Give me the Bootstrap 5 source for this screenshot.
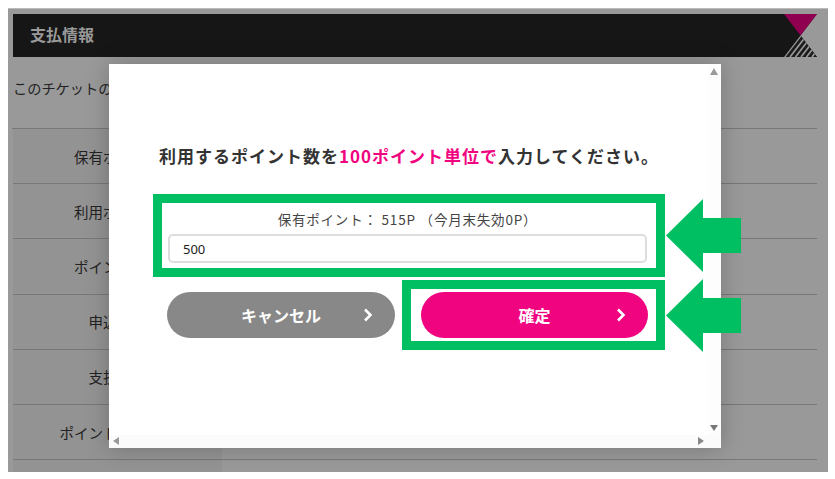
<!DOCTYPE html>
<html lang="ja">
<head>
<meta charset="utf-8">
<title>支払情報</title>
<link rel="stylesheet" href="https://cdn.jsdelivr.net/npm/bootstrap@5.3.0/dist/css/bootstrap.min.css">
<style>
html,body{height:100%;overflow:hidden;background:#fff}
body{font-family:"Noto Sans CJK JP","Liberation Sans",sans-serif;color:#333}
.stage{margin:8px 7px 0 8px;height:464px;background:#999;padding:6px 11px 0 5px;overflow:hidden;border-top:1px solid #bbb}
.pay-head{height:43px;margin-top:-1px;background:#161616;color:#999;font-size:16px;font-weight:700;padding-left:17px}
.pay-title{position:relative;top:-2px}
.pay-logo{width:33px;height:43px;display:block}
.pay-intro{height:72px;font-size:14.2px;color:#222;padding-top:21px;margin-left:-1px;padding-left:1px;border-bottom:1px solid #777}
.pay-row{height:55.2px;border-bottom:1px solid #777}
.pay-row-end{height:20px}
.pay-label{width:209px;background:#939393;font-size:14.5px;color:#222;padding-top:1px}
.pay-dialog{left:109px;top:64px;width:612px;height:384px;background:#fff;box-shadow:0 0 22px rgba(0,0,0,.22);z-index:5}
.dlg-title{font-size:17px;font-weight:700;letter-spacing:1px;color:#333;margin:82px 0 0 50px;line-height:20px;white-space:nowrap}
.dlg-title em{font-style:normal;color:#f0047f}
.dlg-body{width:481px;margin-left:58px}
.dlg-balance{font-size:13.5px;letter-spacing:.8px;line-height:18px;margin-top:44px;color:#444}
.dlg-input{height:29px;margin:6px 0 0 1px;width:479px;border:2px solid #ddd;border-radius:5px;font-size:13px;padding:0 13px;color:#222;font-family:"Noto Sans",sans-serif}
.dlg-actions{margin-top:29px}
.dlg-btn{width:228px;height:46px;border:0;border-radius:23px;color:#fff;font-size:16px;font-weight:700;line-height:46px;padding:0}
.dlg-cancel{background:#888}
.dlg-cancel:hover{background:#888;color:#fff}
.dlg-ok{background:#f0047f;margin-left:26px;width:227px}
.dlg-ok:hover{background:#f0047f;color:#fff}
.dlg-chev{right:22px;top:16px;width:10px;height:14px}
.track-v{right:0;top:0;bottom:0;width:13px;background:#fdfdfd}
.track-h{left:0;right:0;bottom:0;height:13px;background:#fbfbfb}
.hint-box{border:9px solid #00bf63;z-index:6}
.hint-a{left:153px;top:194px;width:512px;height:83px}
.hint-b{left:402px;top:280px;width:263px;height:70px}
.hint-arrow{width:76px;height:73px;left:665px;z-index:6}
.arrow-a{top:199px}
.arrow-b{top:279px}
.sb-mark{z-index:6}
.sb-up{left:709px;top:68px}
.sb-down{left:709px;top:424px}
.sb-left{left:112px;top:436px}
.sb-right{left:697px;top:436px}
</style>
</head>
<body>
<div class="stage">
  <div class="pay-head d-flex align-items-center justify-content-between">
    <span class="pay-title">支払情報</span>
    <svg class="pay-logo" viewBox="0 0 33 43" aria-hidden="true">
      <defs><clipPath id="hatch"><polygon points="16.5,21.5 33,43 0,43"/></clipPath></defs>
      <polygon points="33,0 33,43 16.5,21.5" fill="#999"/>
      <polygon points="0,0 33,0 16.5,21.5" fill="#8f0050"/>
      <polygon points="16.5,21.5 33,43 0,43" fill="#1c1c1c"/>
      <g clip-path="url(#hatch)" stroke="#999" stroke-width="1.7">
        <line x1="0.5" y1="43" x2="17" y2="21.5"/><line x1="6" y1="43" x2="22.5" y2="21.5"/>
        <line x1="11.5" y1="43" x2="28" y2="21.5"/><line x1="17" y1="43" x2="33.5" y2="21.5"/>
        <line x1="22.5" y1="43" x2="39" y2="21.5"/><line x1="28" y1="43" x2="44.5" y2="21.5"/>
      </g>
    </svg>
  </div>
  <div class="pay-intro">このチケットのポイント利用について</div>
  <div class="pay-row d-flex"><div class="pay-label d-flex align-items-center justify-content-center">保有ポイント</div></div>
  <div class="pay-row d-flex"><div class="pay-label d-flex align-items-center justify-content-center">利用ポイント</div></div>
  <div class="pay-row d-flex"><div class="pay-label d-flex align-items-center justify-content-center">ポイント単価</div></div>
  <div class="pay-row d-flex"><div class="pay-label d-flex align-items-center justify-content-center">申込金額</div></div>
  <div class="pay-row d-flex"><div class="pay-label d-flex align-items-center justify-content-center">支払金額</div></div>
  <div class="pay-row d-flex"><div class="pay-label d-flex align-items-center justify-content-center">ポイント利用金額</div></div>
  <div class="pay-row-end d-flex"><div class="pay-label"></div></div>
</div>

<div class="pay-dialog position-absolute">
  <div class="track-v position-absolute"></div>
  <div class="track-h position-absolute"></div>
  <div class="position-relative">
    <p class="dlg-title mb-0">利用するポイント数を<em>100ポイント単位で</em>入力してください。</p>
    <div class="dlg-body">
      <div class="dlg-balance text-center">保有ポイント： 515P （今月末失効0P）</div>
      <input class="form-control dlg-input" type="text" value="500" aria-label="利用ポイント">
      <div class="dlg-actions d-flex">
        <button type="button" class="btn dlg-btn dlg-cancel position-relative">キャンセル
          <svg class="dlg-chev position-absolute" viewBox="0 0 10 14" aria-hidden="true"><path d="M2 1.5 7.5 7 2 12.5" fill="none" stroke="#fff" stroke-width="2.6"/></svg>
        </button>
        <button type="button" class="btn dlg-btn dlg-ok position-relative">確定
          <svg class="dlg-chev position-absolute" viewBox="0 0 10 14" aria-hidden="true"><path d="M2 1.5 7.5 7 2 12.5" fill="none" stroke="#fff" stroke-width="2.6"/></svg>
        </button>
      </div>
    </div>
  </div>
</div>

<svg class="sb-mark sb-up position-absolute" width="10" height="8" viewBox="0 0 10 8" aria-hidden="true"><polygon points="5,0 9,7 1,7" fill="#9a9a9a"/></svg>
<svg class="sb-mark sb-down position-absolute" width="10" height="8" viewBox="0 0 10 8" aria-hidden="true"><polygon points="1,1 9,1 5,7" fill="#777"/></svg>
<svg class="sb-mark sb-left position-absolute" width="8" height="10" viewBox="0 0 8 10" aria-hidden="true"><polygon points="7,1 7,9 1,5" fill="#9a9a9a"/></svg>
<svg class="sb-mark sb-right position-absolute" width="8" height="10" viewBox="0 0 8 10" aria-hidden="true"><polygon points="1,1 1,9 7,5" fill="#888"/></svg>

<div class="hint-box hint-a position-absolute"></div>
<div class="hint-box hint-b position-absolute"></div>
<svg class="hint-arrow arrow-a position-absolute" viewBox="0 0 76 73" aria-hidden="true"><polygon points="1,36.5 38,0 38,19 76,19 76,54 38,54 38,73" fill="#00bf63"/></svg>
<svg class="hint-arrow arrow-b position-absolute" viewBox="0 0 76 73" aria-hidden="true"><polygon points="1,36.5 38,0 38,19 76,19 76,54 38,54 38,73" fill="#00bf63"/></svg>

<script src="https://cdn.jsdelivr.net/npm/bootstrap@5.3.0/dist/js/bootstrap.bundle.min.js"></script>
</body>
</html>
